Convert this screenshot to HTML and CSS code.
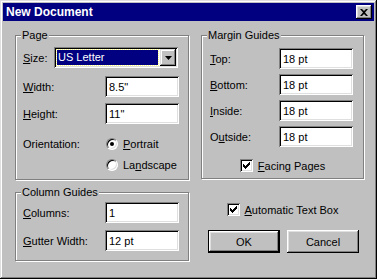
FILE: index.html
```html
<!DOCTYPE html>
<html lang="en">
<head>
    <meta charset="UTF-8">
    <meta name="viewport" content="width=device-width, initial-scale=1.0">
    <title>New Document</title>
    <link rel="stylesheet" href="styles.css">
</head>
<body>
    <div class="window">
        <div class="titlebar">
            <span class="title">New Document</span>
            <button class="close-btn" type="button">
                <svg width="8" height="7" viewBox="0 0 8 7"><path d="M0 0h2l2 2 2-2h2L5 3.5 8 7H6L4 5 2 7H0l3-3.5z" fill="#000"/></svg>
            </button>
        </div>

        <div class="dialog">
            <div class="col-left">
                <div class="group page-group">
                    <span class="legend">Page</span>
                    <div class="row row-size">
                        <label class="lbl size-lbl"><u>S</u>ize:</label>
                        <div class="select">
                            <span class="select-value">US Letter</span>
                            <span class="drop-btn">
                                <svg width="7" height="4" viewBox="0 0 7 4"><path d="M0 0h7L3.5 4z" fill="#000"/></svg>
                            </span>
                        </div>
                    </div>
                    <div class="row row-width">
                        <label class="lbl page-lbl"><u>W</u>idth:</label>
                        <input class="field" type="text" value="8.5&quot;" readonly>
                    </div>
                    <div class="row">
                        <label class="lbl page-lbl"><u>H</u>eight:</label>
                        <input class="field" type="text" value="11&quot;" readonly>
                    </div>
                    <div class="row orient-row">
                        <span class="lbl orient-lbl">Orientation:</span>
                        <span class="radio checked"></span>
                        <span class="opt-text"><u>P</u>ortrait</span>
                    </div>
                    <div class="row radio-row">
                        <span class="radio"></span>
                        <span class="opt-text">La<u>n</u>dscape</span>
                    </div>
                </div>

                <div class="group column-group">
                    <span class="legend">Column Guides</span>
                    <div class="row row-columns">
                        <label class="lbl page-lbl"><u>C</u>olumns:</label>
                        <input class="field" type="text" value="1" readonly>
                    </div>
                    <div class="row">
                        <label class="lbl page-lbl"><u>G</u>utter Width:</label>
                        <input class="field" type="text" value="12 pt" readonly>
                    </div>
                </div>
            </div>

            <div class="col-right">
                <div class="group margin-group">
                    <span class="legend">Margin Guides</span>
                    <div class="row margin-row">
                        <label class="lbl margin-lbl"><u>T</u>op:</label>
                        <input class="field" type="text" value="18 pt" readonly>
                    </div>
                    <div class="row margin-row">
                        <label class="lbl margin-lbl"><u>B</u>ottom:</label>
                        <input class="field" type="text" value="18 pt" readonly>
                    </div>
                    <div class="row margin-row">
                        <label class="lbl margin-lbl"><u>I</u>nside:</label>
                        <input class="field" type="text" value="18 pt" readonly>
                    </div>
                    <div class="row">
                        <label class="lbl margin-lbl">O<u>u</u>tside:</label>
                        <input class="field" type="text" value="18 pt" readonly>
                    </div>
                    <div class="row check-row facing-row">
                        <span class="check">
                            <svg width="7" height="7" viewBox="0 0 7 7"><path d="M0.5 2v3M1.5 3v3M2.5 4v3M3.5 3v3M4.5 2v3M5.5 1v3M6.5 0v3" stroke="#000" shape-rendering="crispEdges"/></svg>
                        </span>
                        <span class="opt-text"><u>F</u>acing Pages</span>
                    </div>
                </div>

                <div class="row check-row auto-row">
                    <span class="check">
                        <svg width="7" height="7" viewBox="0 0 7 7"><path d="M0.5 2v3M1.5 3v3M2.5 4v3M3.5 3v3M4.5 2v3M5.5 1v3M6.5 0v3" stroke="#000" shape-rendering="crispEdges"/></svg>
                    </span>
                    <span class="opt-text"><u>A</u>utomatic Text Box</span>
                </div>

                <div class="buttons">
                    <button class="btn default" type="button">OK</button>
                    <button class="btn" type="button">Cancel</button>
                </div>
            </div>
        </div>
    </div>
</body>
</html>
```

FILE: styles.css
```css
* {
    box-sizing: border-box;
}

body {
    margin: 0;
    font-family: "Liberation Sans", Arial, sans-serif;
    font-size: 11px;
    color: #000;
}

u {
    text-decoration: underline;
    text-underline-offset: 1px;
}

.window {
    width: 377px;
    height: 279px;
    padding: 3px;
    background-color: #c0c0c0;
    box-shadow: inset -1px -1px #000, inset 1px 1px #dfdfdf,
                inset -2px -2px #808080, inset 2px 2px #fff;
}

.titlebar {
    height: 18px;
    display: flex;
    align-items: center;
    justify-content: space-between;
    padding: 0 2px 0 3px;
    background-color: #000080;
    color: #fff;
}

.title {
    font-weight: bold;
    font-size: 12px;
}

.close-btn {
    width: 16px;
    height: 14px;
    padding: 0;
    border: none;
    display: flex;
    align-items: center;
    justify-content: center;
    background-color: #c0c0c0;
    box-shadow: inset -1px -1px #000, inset 1px 1px #fff,
                inset -2px -2px #808080, inset 2px 2px #dfdfdf;
}

.dialog {
    display: flex;
    gap: 12px;
    padding: 14px 10px 0 12px;
}

.col-left {
    width: 174px;
    display: flex;
    flex-direction: column;
    gap: 12px;
}

.col-right {
    width: 163px;
}

/* etched group box */
.group {
    position: relative;
    border: 1px solid #808080;
    box-shadow: inset 1px 1px #fff, 1px 1px #fff;
}

.legend {
    position: absolute;
    top: -8px;
    left: 5px;
    padding: 0 1px;
    background-color: #c0c0c0;
    line-height: 14px;
}

.page-group {
    height: 145px;
    padding: 11px 0 0 7px;
}

.column-group {
    height: 69px;
    padding: 9px 0 0 7px;
}

.margin-group {
    height: 144px;
    padding: 12px 0 0 8px;
}

.row {
    height: 21px;
    display: flex;
    align-items: center;
}

.row-size {
    margin-bottom: 8px;
}

.row-width {
    margin-bottom: 6px;
}

.row-columns {
    margin-bottom: 7px;
}

.margin-row {
    margin-bottom: 5px;
}

.lbl {
    flex-shrink: 0;
}

.size-lbl {
    width: 31px;
}

.page-lbl {
    width: 82px;
}

.orient-lbl {
    width: 83px;
}

.margin-lbl {
    width: 69px;
}

.orient-row {
    margin-top: 9px;
}

.radio-row {
    padding-left: 83px;
}

.field {
    width: 74px;
    height: 21px;
    padding: 0 3px 0 4px;
    border: none;
    outline: none;
    background-color: #fff;
    font: inherit;
    color: #000;
    box-shadow: inset 1px 1px #808080, inset -1px -1px #fff,
                inset 2px 2px #000, inset -2px -2px #dfdfdf;
}

.select {
    width: 124px;
    height: 21px;
    display: flex;
    align-items: center;
    padding: 2px;
    background-color: #fff;
    box-shadow: inset 1px 1px #808080, inset -1px -1px #fff,
                inset 2px 2px #000, inset -2px -2px #dfdfdf;
}

.select-value {
    flex: 1;
    height: 15px;
    margin: 0 2px 0 1px;
    padding-left: 1px;
    line-height: 15px;
    background-color: #000080;
    color: #fff;
    outline: 1px dotted #ffff80;
}

.drop-btn {
    width: 16px;
    height: 17px;
    display: flex;
    align-items: center;
    justify-content: center;
    background-color: #c0c0c0;
    box-shadow: inset -1px -1px #000, inset 1px 1px #dfdfdf,
                inset -2px -2px #808080, inset 2px 2px #fff;
}

.radio {
    width: 12px;
    height: 12px;
    flex-shrink: 0;
    display: flex;
    align-items: center;
    justify-content: center;
    border-radius: 50%;
    border: 1px solid;
    border-color: #808080 #fff #fff #808080;
    background-color: #fff;
    box-shadow: inset 1px 1px #000, inset -1px -1px #dfdfdf;
}

.radio.checked::after {
    content: "";
    width: 4px;
    height: 4px;
    border-radius: 50%;
    background-color: #000;
}

.opt-text {
    margin-left: 5px;
}

.check {
    width: 13px;
    height: 13px;
    flex-shrink: 0;
    display: flex;
    align-items: center;
    justify-content: center;
    background-color: #fff;
    box-shadow: inset 1px 1px #808080, inset -1px -1px #fff,
                inset 2px 2px #000, inset -2px -2px #dfdfdf;
}

.check-row {
    justify-content: center;
}

.facing-row {
    margin-top: 8px;
    padding-right: 8px;
}

.auto-row {
    margin-top: 20px;
}

.buttons {
    display: flex;
    justify-content: center;
    gap: 7px;
    margin-top: 10px;
    padding-left: 2px;
}

.btn {
    width: 72px;
    height: 23px;
    padding: 0;
    border: none;
    background-color: #c0c0c0;
    font: inherit;
    color: #000;
    box-shadow: inset -1px -1px #000, inset 1px 1px #fff,
                inset -2px -2px #808080, inset 2px 2px #dfdfdf;
}

.btn.default {
    border: 1px solid #000;
    box-shadow: inset -1px -1px #000, inset 1px 1px #fff,
                inset -2px -2px #808080, inset 2px 2px #dfdfdf;
}
```
